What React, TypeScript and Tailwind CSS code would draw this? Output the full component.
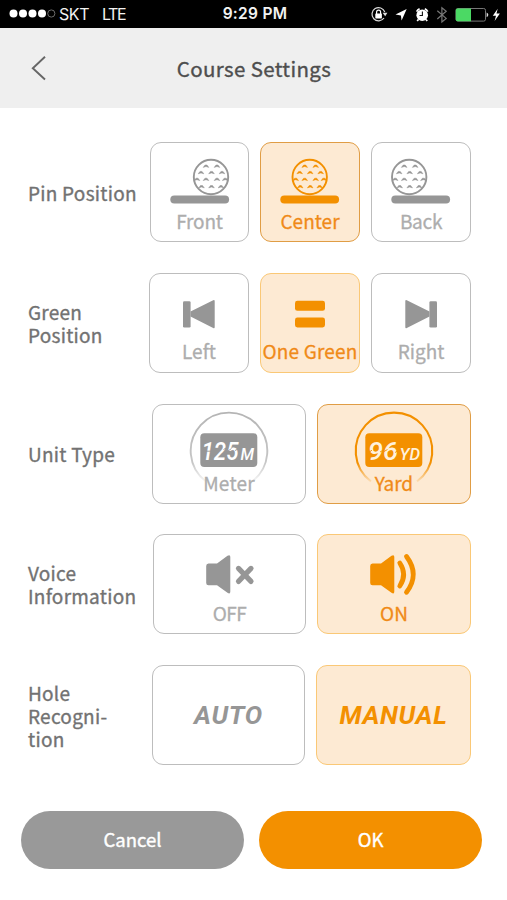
import type { ReactNode } from "react";

const SANS = "font-['Noto_Sans_CJK_KR','Noto_Sans',sans-serif]";

type Tone = "gray" | "dark" | "light";

const cardTones: Record<Tone, string> = {
  gray: "border-[#bdbdbd] bg-white text-[#adadad]",
  dark: "border-[#e09d45] bg-[#fdead3] text-[#f08a18]",
  light: "border-[#fac876] bg-[#fdead3] text-[#f08a18]",
};

function Card({ tone, width, label, icon, labelClass = "" }: { tone: Tone; width: string; label: string; icon: ReactNode; labelClass?: string }) {
  return (
    <button className={`flex h-[100px] shrink-0 flex-col items-center rounded-[11px] border ${cardTones[tone]} ${width}`}>
      {icon}
      <span className={`-mt-px h-6 whitespace-nowrap text-[19px] leading-6 [-webkit-text-stroke:0.3px_currentColor] ${labelClass}`}>{label}</span>
    </button>
  );
}

function Row({ lines, children }: { lines: string[]; children: ReactNode }) {
  return (
    <section className="flex h-[100px] items-center justify-between">
      <h2 className="flex flex-col whitespace-nowrap text-[19px] font-normal leading-[23px] tracking-[0.25px] text-[#727272] [-webkit-text-stroke:0.35px_#727272]">
        {lines.map((line) => (
          <span key={line}>{line}</span>
        ))}
      </h2>
      <div className="flex gap-[11px]">{children}</div>
    </section>
  );
}

const dimples = [
  [-5, -11], [6, -11],
  [-10, -4.6], [0.5, -4.6], [11, -4.6],
  [-14, 2.2], [-5, 2.2], [6, 2.2], [14.2, 2.2],
  [-9.5, 9.5], [0.5, 9.5], [10, 9.5],
];

function BallIcon({ cx, color }: { cx: number; color: string }) {
  return (
    <svg width="60" height="67" viewBox="0 0 60 67" className="shrink-0 overflow-visible" fill="none">
      <circle cx={cx} cy="34" r="17.2" stroke={color} strokeWidth="1.9" />
      {dimples.map(([x, y], i) => (
        <path key={i} d={`M${cx + x - 2.8} ${34 + y + 1.4}L${cx + x - 1} ${34 + y - 1}H${cx + x + 1}L${cx + x + 2.8} ${34 + y + 1.4}L${cx + x} ${34 + y + 0.5}Z`} fill={color} stroke={color} strokeWidth="0.5" strokeLinejoin="round" />
      ))}
      <rect x="0.3" y="52.5" width="58.8" height="8" rx="4" fill={color} />
    </svg>
  );
}

function SkipIcon({ right = false }: { right?: boolean }) {
  return (
    <svg width="34" height="66" viewBox="0 0 34 66" className={`shrink-0 ${right ? "-scale-x-100" : ""}`} fill="#969696">
      <rect x="1" y="27.2" width="7.6" height="26.3" rx="1.3" />
      <path d="M8.5 37.5L31.2 26.3Q32.7 25.6 32.7 27.2V53Q32.7 54.8 31.2 54L8.5 42.5Z" />
    </svg>
  );
}

function EqualsIcon() {
  return (
    <svg width="30" height="66" viewBox="0 0 30 66" className="shrink-0" fill="#f39000">
      <rect y="26.8" width="30" height="10" rx="2.4" />
      <rect y="43.5" width="30" height="10" rx="2.4" />
    </svg>
  );
}

function MeterIcon({ value, unit, yard = false }: { value: string; unit: string; yard?: boolean }) {
  const id = yard ? "ring-yard" : "ring-meter";
  const color = yard ? "#f39000" : "#969696";
  const ring = yard ? "#f39000" : "#b4b4b4";
  const ink = yard ? "#fff1dc" : "#ffffff";
  return (
    <svg width="80" height="67" viewBox="0 0 80 67" className="shrink-0 overflow-visible">
      <defs>
        <linearGradient id={id} x1="0" y1="6" x2="0" y2="80" gradientUnits="userSpaceOnUse">
          <stop offset="0" stopColor={ring} />
          <stop offset="0.7" stopColor={ring} stopOpacity={yard ? 1 : 0.75} />
          <stop offset="1" stopColor={ring} stopOpacity="0" />
        </linearGradient>
      </defs>
      <path d="M17 76.5A38.3 38.3 0 1 1 63 76.5" fill="none" stroke={`url(#${id})`} strokeWidth={yard ? 2.1 : 1.9} />
      <rect x="11.3" y="28.3" width="57" height="33.7" rx="4" fill={color} />
      <g fill={ink} fontFamily="Roboto" fontStyle="italic" fontWeight="500">
        <text x={yard ? 14 : 12.5} y="54.8" fontSize="26.5" textLength={yard ? 30 : 37} lengthAdjust="spacingAndGlyphs">{value}</text>
        <text x={yard ? 45.5 : 51.5} y="54.8" fontSize="16.5" textLength={yard ? 20.5 : 13.5} lengthAdjust="spacingAndGlyphs">{unit}</text>
      </g>
      {/* gaps between the display segments */}
      <path
        d={yard ? "M14.5 47.5L18 45.2M26 47L30 44.8M30 46.5L33.5 44.5M41 47.5L45 45" : "M15 46.2H24M26 48.5L29.5 46M34.5 44.5L38 42.5M39 46L42.5 43.5M46 45.5L50 43.5"}
        stroke={color}
        strokeWidth="0.9"
      />
    </svg>
  );
}

function SpeakerIcon({ on = false }: { on?: boolean }) {
  const color = on ? "#f39000" : "#969696";
  return (
    <svg width="50" height="67" viewBox="0 0 50 67" className="shrink-0 overflow-visible" fill="none">
      <path d="M3.5 28.5H12L22.5 20.8Q25.3 19.3 25.3 22V56.5Q25.3 59.6 22.5 57.8L12 50.2H3.5Q1.2 50.2 1.2 48V31Q1.2 28.5 3.5 28.5Z" fill={color} />
      {on ? (
        <g stroke={color} strokeWidth="4.8" strokeLinecap="round">
          <path d="M30.8 28Q38.5 39.5 30.8 51" />
          <path d="M37.5 21.5Q51 39.5 37.5 57.3" />
        </g>
      ) : (
        <path d="M33.5 33.4L46 46.4M46 33.4L33.5 46.4" stroke={color} strokeWidth="5.2" strokeLinecap="round" />
      )}
    </svg>
  );
}

function WordCard({ tone, width, children }: { tone: Tone; width: string; children: string }) {
  return (
    <button className={`flex h-[100px] shrink-0 items-center justify-center rounded-[11px] border font-[Roboto,sans-serif] text-[26px] font-bold italic ${cardTones[tone]} ${width}`}>
      <span className={tone === "gray" ? "tracking-[0.7px] text-[#969696]" : "tracking-[0.7px] text-[#f39000]"}>{children}</span>
    </button>
  );
}

function StatusBar() {
  return (
    <div className="grid h-7 grid-cols-[1fr_auto_1fr] items-center bg-black font-[Inter,sans-serif] text-[16px] leading-7 text-[#f2f2f2]">
      <div className="flex items-center pl-[9px]">
        <svg width="47" height="10" viewBox="0 0 47 10" fill="#fff">
          <circle cx="4.5" cy="4.5" r="4" />
          <circle cx="14" cy="4.5" r="4" />
          <circle cx="23.5" cy="4.5" r="4" />
          <circle cx="33" cy="4.5" r="4" />
          <circle cx="42.3" cy="4.5" r="3.6" fill="none" stroke="#777" strokeWidth="0.9" />
        </svg>
        <span className="ml-[3px] w-[43px] text-[16px] tracking-[-0.4px]">SKT</span>
        <span className="text-[16px] tracking-[-1.4px]">LTE</span>
      </div>
      <span className="pl-[3px] text-[15.5px] font-semibold tracking-[0.3px]">9:29 PM</span>
      <div className="flex justify-end pr-[4px]">
        <svg width="133" height="28" viewBox="370 0 133 28" fill="none">
          <path d="M384 18A6.6 6.6 0 1 1 384.8 12" stroke="#ddd" strokeWidth="1.2" />
          <path d="M382.6 12.8H387.4L385.2 16.2Z" fill="#ddd" />
          <rect x="375.3" y="13.4" width="6.6" height="5" rx="0.6" fill="#fff" />
          <path d="M376.6 14V12.2A2 2 0 0 1 380.6 12.2V14" stroke="#fff" strokeWidth="1.2" />
          <path d="M406.7 9.1L401.6 20.4L400.9 15.4L395.5 14.6Z" fill="#fff" />
          <circle cx="422.2" cy="15.2" r="5.8" fill="#fff" />
          <path d="M416.6 11.6A7 7 0 0 1 419.6 8.8M424.8 8.8A7 7 0 0 1 427.8 11.6M418.4 19.5L417.2 21M426 19.5L427.2 21" stroke="#fff" strokeWidth="1.7" />
          <path d="M422.4 11.5V15.5H419.5" stroke="#111" strokeWidth="1.1" />
          <path d="M437.3 10.8L446.2 18.4L441.9 22V7.8L446.2 11.2L437.3 19" stroke="#777" strokeWidth="1.2" />
          <rect x="456" y="8.5" width="29.5" height="12.6" rx="1.8" stroke="#777" strokeWidth="1" />
          <path d="M457.5 8.4H471V21.2H457.5Q455.8 21.2 455.8 19.5V10Q455.8 8.4 457.5 8.4Z" fill="#4bd964" />
          <path d="M486.6 12.4Q488.3 13.2 488.3 14.8T486.6 17.2Z" fill="#ddd" />
          <path d="M497.7 8.7L492.8 15.7H496L494.6 21L499.9 13.5H496.5Z" fill="#fff" />
        </svg>
      </div>
    </div>
  );
}

export default function App() {
  return (
    <div className={`flex h-[900px] w-[507px] flex-col overflow-hidden bg-white ${SANS}`}>
      <StatusBar />
      <header className="grid h-20 grid-cols-[1fr_auto_1fr] items-center bg-[#efefef] text-[#4e4e4e]">
        <svg width="16" height="26" viewBox="0 0 16 26" className="ml-[31px]" fill="none">
          <path d="M14 1.8L1.8 13.2L14 24.5" stroke="#666" strokeWidth="1.9" />
        </svg>
        <h1 className="pl-px pt-px text-[20.5px] font-normal tracking-[0.35px] [-webkit-text-stroke:0.35px_#4e4e4e]">Course Settings</h1>
      </header>

      <main className="mt-[34px] flex flex-col gap-[30.75px] pl-7 pr-9">
        <Row lines={["Pin Position"]}>
          <Card tone="gray" width="w-[99px]" label="Front" labelClass="tracking-[-0.2px]" icon={<BallIcon cx={41} color="#969696" />} />
          <Card tone="dark" width="w-[100px]" label="Center" icon={<BallIcon cx={29.7} color="#f39000" />} />
          <Card tone="gray" width="w-[100px]" label="Back" labelClass="tracking-[-0.3px]" icon={<BallIcon cx={18.2} color="#969696" />} />
        </Row>
        <Row lines={["Green", "Position"]}>
          <Card tone="gray" width="w-[100px]" label="Left" icon={<SkipIcon />} />
          <Card tone="light" width="w-[100px]" label="One Green" labelClass="tracking-[0.2px]" icon={<EqualsIcon />} />
          <Card tone="gray" width="w-[100px]" label="Right" icon={<SkipIcon right />} />
        </Row>
        <Row lines={["Unit Type"]}>
          <Card tone="gray" width="w-[154px]" label="Meter" labelClass="tracking-[0.2px]" icon={<MeterIcon value="125" unit="M" />} />
          <Card tone="dark" width="w-[154px]" label="Yard" icon={<MeterIcon value="96" unit="YD" yard />} />
        </Row>
        <Row lines={["Voice", "Information"]}>
          <Card tone="gray" width="w-[153px]" label="OFF" labelClass="tracking-[-0.5px]" icon={<SpeakerIcon />} />
          <Card tone="light" width="w-[154px]" label="ON" icon={<SpeakerIcon on />} />
        </Row>
        <Row lines={["Hole", "Recogni-", "tion"]}>
          <WordCard tone="gray" width="w-[153px]">AUTO</WordCard>
          <WordCard tone="light" width="w-[155px]">MANUAL</WordCard>
        </Row>
      </main>

      <footer className="mt-[46px] flex gap-[15px] pl-[21px] text-[18.5px] text-white [-webkit-text-stroke:0.4px_#fff]">
        <button className="h-[58px] w-[223px] rounded-full bg-[#999]">Cancel</button>
        <button className="h-[58px] w-[223px] rounded-full bg-[#f39000]">OK</button>
      </footer>
    </div>
  );
}
